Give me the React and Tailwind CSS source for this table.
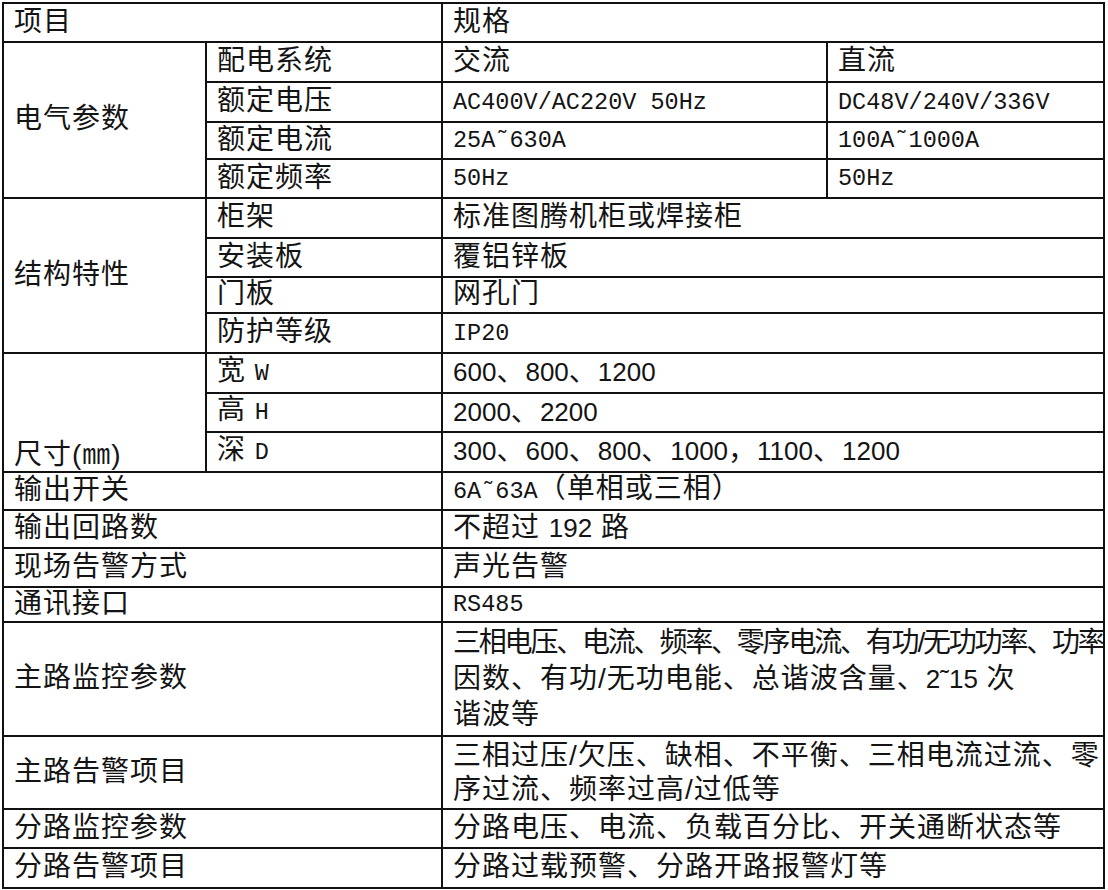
import React from 'react'

const sans = "font-['Liberation_Sans','Noto_Sans_CJK_SC',sans-serif]"
const mono = "font-['Liberation_Mono','Noto_Sans_CJK_SC',monospace] text-[23.5px] tracking-normal"

// SimSun-like half-width latin (serif mono)
function M({ children }) {
  return <span className={mono}>{children}</span>
}

// proportional digits
function N({ children }) {
  return <span className="text-[26px] tracking-normal">{children}</span>
}

const td = 'border-2 border-[#111] px-[10px] pb-[2px] align-middle leading-[28px] whitespace-nowrap tracking-[1px]'

export default function App() {
  return (
    <div className="bg-white min-h-screen p-[2px]">
      <table className={`table-fixed border-collapse w-[1103px] text-[28px] text-[#141414] ${sans}`}>
        <colgroup>
          <col className="w-[203px]" />
          <col className="w-[236px]" />
          <col className="w-[385px]" />
          <col className="w-[277px]" />
        </colgroup>
        <tbody>
          <tr className="h-[39px]">
            <td className={td} colSpan={2}>项目</td>
            <td className={td} colSpan={2}>规格</td>
          </tr>

          {/* 电气参数 */}
          <tr className="h-[40px]">
            <td className={td} rowSpan={4}>电气参数</td>
            <td className={td}>配电系统</td>
            <td className={td}>交流</td>
            <td className={td}>直流</td>
          </tr>
          <tr className="h-[40px]">
            <td className={td}>额定电压</td>
            <td className={td}><M>AC400V/AC220V 50Hz</M></td>
            <td className={td}><M>DC48V/240V/336V</M></td>
          </tr>
          <tr className="h-[37px]">
            <td className={td}>额定电流</td>
            <td className={td}><M>25A˜630A</M></td>
            <td className={td}><M>100A˜1000A</M></td>
          </tr>
          <tr className="h-[39px]">
            <td className={td}>额定频率</td>
            <td className={td}><M>50Hz</M></td>
            <td className={td}><M>50Hz</M></td>
          </tr>

          {/* 结构特性 */}
          <tr className="h-[40px]">
            <td className={td} rowSpan={4}>结构特性</td>
            <td className={td}>柜架</td>
            <td className={td} colSpan={2}>标准图腾机柜或焊接柜</td>
          </tr>
          <tr className="h-[39px]">
            <td className={td}>安装板</td>
            <td className={td} colSpan={2}>覆铝锌板</td>
          </tr>
          <tr className="h-[36px]">
            <td className={td}>门板</td>
            <td className={td} colSpan={2}>网孔门</td>
          </tr>
          <tr className="h-[40px]">
            <td className={td}>防护等级</td>
            <td className={td} colSpan={2}><M>IP20</M></td>
          </tr>

          {/* 尺寸 */}
          <tr className="h-[40px]">
            <td className={`${td} !align-bottom`} rowSpan={3}>尺寸(㎜)</td>
            <td className={td}>宽 <M>W</M></td>
            <td className={td} colSpan={2}><N>600</N>、<N>800</N>、<N>1200</N></td>
          </tr>
          <tr className="h-[39px]">
            <td className={td}>高 <M>H</M></td>
            <td className={td} colSpan={2}><N>2000</N>、<N>2200</N></td>
          </tr>
          <tr className="h-[40px]">
            <td className={td}>深 <M>D</M></td>
            <td className={td} colSpan={2}>
              <N>300</N>、<N>600</N>、<N>800</N>、<N>1000</N>，<N>1100</N>、<N>1200</N>
            </td>
          </tr>

          <tr className="h-[38px]">
            <td className={td} colSpan={2}>输出开关</td>
            <td className={td} colSpan={2}><M>6A˜63A</M>（单相或三相）</td>
          </tr>
          <tr className="h-[38px]">
            <td className={td} colSpan={2}>输出回路数</td>
            <td className={td} colSpan={2}>不超过 <N>192</N> 路</td>
          </tr>
          <tr className="h-[39px]">
            <td className={td} colSpan={2}>现场告警方式</td>
            <td className={td} colSpan={2}>声光告警</td>
          </tr>
          <tr className="h-[34px]">
            <td className={td} colSpan={2}>通讯接口</td>
            <td className={td} colSpan={2}><M>RS485</M></td>
          </tr>

          <tr className="h-[114px]">
            <td className={td} colSpan={2}>主路监控参数</td>
            <td className={`${td} !pb-0`} colSpan={2}>
              <div className="leading-[36px] tracking-[-2.2px]">三相电压、电流、频率、零序电流、有功/无功功率、功率</div>
              <div className="leading-[36px]">因数、有功/无功电能、总谐波含量、<N>2˜15</N> 次</div>
              <div className="leading-[36px]">谐波等</div>
            </td>
          </tr>
          <tr className="h-[73px]">
            <td className={td} colSpan={2}>主路告警项目</td>
            <td className={`${td} !pb-0`} colSpan={2}>
              <div className="leading-[34px]">三相过压/欠压、缺相、不平衡、三相电流过流、零</div>
              <div className="leading-[34px]">序过流、频率过高/过低等</div>
            </td>
          </tr>
          <tr className="h-[39px]">
            <td className={td} colSpan={2}>分路监控参数</td>
            <td className={td} colSpan={2}>分路电压、电流、负载百分比、开关通断状态等</td>
          </tr>
          <tr className="h-[40px]">
            <td className={td} colSpan={2}>分路告警项目</td>
            <td className={td} colSpan={2}>分路过载预警、分路开路报警灯等</td>
          </tr>
        </tbody>
      </table>
    </div>
  )
}
